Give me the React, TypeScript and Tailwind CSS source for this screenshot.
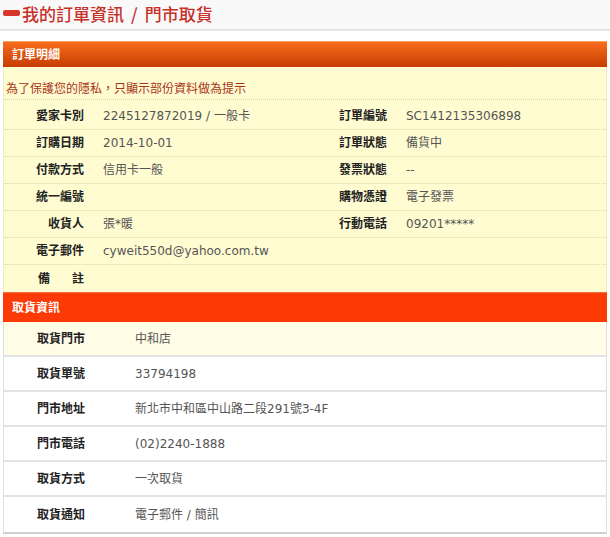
import React from "react";

const font = "font-['DejaVu_Sans','Noto_Sans_CJK_TC',sans-serif]";

interface Field {
  label: React.ReactNode;
  value: string;
}

const orderRows: [Field, Field | null][] = [
  [
    { label: "愛家卡別", value: "2245127872019 / 一般卡" },
    { label: "訂單編號", value: "SC1412135306898" },
  ],
  [
    { label: "訂購日期", value: "2014-10-01" },
    { label: "訂單狀態", value: "備貨中" },
  ],
  [
    { label: "付款方式", value: "信用卡一般" },
    { label: "發票狀態", value: "--" },
  ],
  [
    { label: "統一編號", value: "" },
    { label: "購物憑證", value: "電子發票" },
  ],
  [
    { label: "收貨人", value: "張*暖" },
    { label: "行動電話", value: "09201*****" },
  ],
  [{ label: "電子郵件", value: "cyweit550d@yahoo.com.tw" }, null],
  [
    {
      label: (
        <>
          <span className="mr-[22px]">備</span>註
        </>
      ),
      value: "",
    },
    null,
  ],
];

const pickupRows: Field[] = [
  { label: "取貨門市", value: "中和店" },
  { label: "取貨單號", value: "33794198" },
  { label: "門市地址", value: "新北市中和區中山路二段291號3-4F" },
  { label: "門市電話", value: "(02)2240-1888" },
  { label: "取貨方式", value: "一次取貨" },
  { label: "取貨通知", value: "電子郵件 / 簡訊" },
];

export default function App() {
  return (
    <div className={`w-[610px] h-[537px] bg-white overflow-hidden ${font}`}>
      {/* 標題 */}
      <div className="h-[31px] pb-[3px] bg-[#f9f9f9] border-b-2 border-[#e4e4e4] flex items-center pl-[3px]">
        <span className="w-[17px] h-[6px] rounded-[2px] bg-[#d8362a] mr-[2px]" />
        <h1 className="text-[17px] leading-none text-[#c8302a] font-['Noto_Sans_CJK_TC',sans-serif] font-medium">
          我的訂單資訊<span className="mx-[7px]">/</span>門市取貨
        </h1>
      </div>

      <div className="mx-[3px] mt-[10px]">
        {/* 訂單明細 */}
        <div className="h-[26px] flex items-center pl-[9px] bg-gradient-to-b from-[#f86c1c] to-[#c63c02] border-t border-[#f4a060]">
          <span className="text-white text-[12px] font-bold">訂單明細</span>
        </div>

        <div className="bg-[#fffcd2] border-x border-[#ecebc8]">
          <div className="h-[33px] pt-[14px] pl-[2px] border-b border-dotted border-[#d8d4a8] text-[12px] leading-[16px] text-[#a83418]">
            為了保護您的隱私，只顯示部份資料做為提示
          </div>
          <div className="pt-[3px]">
            {orderRows.map(([left, right], i) => (
              <div
                key={i}
                className={`h-[27px] flex items-center text-[12px] ${
                  i < orderRows.length - 1 ? "border-b border-dotted border-[#dcd8ae]" : ""
                }`}
              >
                <div className="w-[89px] pr-[9px] text-right font-bold text-[#222]">
                  {left.label}
                </div>
                <div className="w-[234px] pl-[10px] text-[#555]">{left.value}</div>
                {right && (
                  <>
                    <div className="w-[70px] pr-[10px] text-right font-bold text-[#222]">
                      {right.label}
                    </div>
                    <div className="pl-[9px] text-[#555]">{right.value}</div>
                  </>
                )}
              </div>
            ))}
          </div>
        </div>

        {/* 取貨資訊 */}
        <div className="h-[30px] flex items-center pl-[9px] bg-[#fb3a06] border-t border-[#f07040]">
          <span className="text-white text-[12px] font-bold">取貨資訊</span>
        </div>

        <div className="border-x border-[#dedede] border-b-2 border-b-[#cfcfcf]">
          {pickupRows.map((row, i) => (
            <div
              key={i}
              className={`h-[35px] flex items-center text-[12px] ${
                i === 0 ? "bg-[#fffde6]" : "bg-white"
              } ${i < pickupRows.length - 1 ? "border-b-2 border-[#e3e3e3]" : ""}`}
            >
              <div className="w-[131px] pl-[33px] font-bold text-[#222]">{row.label}</div>
              <div className="text-[#555]">{row.value}</div>
            </div>
          ))}
        </div>
      </div>
    </div>
  );
}
